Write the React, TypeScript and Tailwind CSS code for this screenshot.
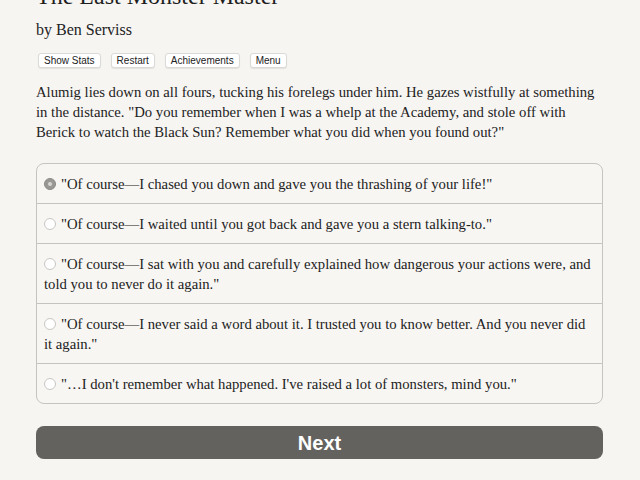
import { useState } from "react";

const choices = [
  "\"Of course—I chased you down and gave you the thrashing of your life!\"",
  "\"Of course—I waited until you got back and gave you a stern talking-to.\"",
  "\"Of course—I sat with you and carefully explained how dangerous your actions were, and told you to never do it again.\"",
  "\"Of course—I never said a word about it. I trusted you to know better. And you never did it again.\"",
  "\"…I don't remember what happened. I've raised a lot of monsters, mind you.\"",
];

const serif = "font-['Palatino_Linotype','Book_Antiqua',Palatino,'Liberation_Serif',serif]";

function Radio({ checked }: { checked: boolean }) {
  return (
    <span
      className={
        "inline-block w-[12px] h-[12px] rounded-full border align-[-1px] mr-[5px] " +
        (checked ? "border-[#8c8a87] bg-[#9a9895]" : "border-[#c9c7c4] bg-white")
      }
    >
      {checked && <span className="block w-[4px] h-[4px] rounded-full bg-[#d8d6d3] mx-auto mt-[3px]" />}
    </span>
  );
}

export default function App() {
  const [picked, setPicked] = useState(0);

  return (
    <div className={`min-h-screen w-full bg-[#f7f5f2] text-[#222] overflow-hidden ${serif}`}>
      <div className="pl-[36px] pr-[37px]">
        <h1 className="text-[24px] leading-[28px] -mt-[18px] text-[#1e1e1e]">The Last Monster Master</h1>
        <div className="text-[16px] leading-[20px] mt-[10px] text-[#222]">by Ben Serviss</div>

        {/* top toolbar */}
        <div className="flex gap-[10px] mt-[13px] pl-[2px] font-['Liberation_Sans',Arial,sans-serif] text-[10px]">
          {["Show Stats", "Restart", "Achievements", "Menu"].map((b) => (
            <button
              key={b}
              className="h-[15px] px-[5px] leading-[13px] bg-white border border-[#dcdad7] rounded-[3px] text-[#222] shadow-[0_1px_1px_rgba(0,0,0,0.08)]"
            >
              {b}
            </button>
          ))}
        </div>

        <p className="mt-[14px] text-[14.7px] leading-[20px]">
          Alumig lies down on all fours, tucking his forelegs under him. He gazes wistfully at something in the
          distance. "Do you remember when I was a whelp at the Academy, and stole off with Berick to watch the
          Black Sun? Remember what you did when you found out?"
        </p>

        {/* choice list */}
        <div className="mt-[21px] border border-[#c6c4c1] rounded-[8px] bg-[#f8f6f3]">
          {choices.map((c, i) => (
            <div
              key={i}
              onClick={() => setPicked(i)}
              className={
                "pl-[7px] pr-[6px] py-[9.5px] text-[14.7px] leading-[20px] cursor-pointer " +
                (i > 0 ? "border-t border-[#c6c4c1]" : "")
              }
            >
              <Radio checked={picked === i} />
              {c}
            </div>
          ))}
        </div>

        <button className="mt-[22px] w-full h-[33px] rounded-[8px] bg-[#64625f] text-white font-bold text-[20px] font-['Liberation_Sans',Arial,sans-serif]">
          Next
        </button>
      </div>
    </div>
  );
}
